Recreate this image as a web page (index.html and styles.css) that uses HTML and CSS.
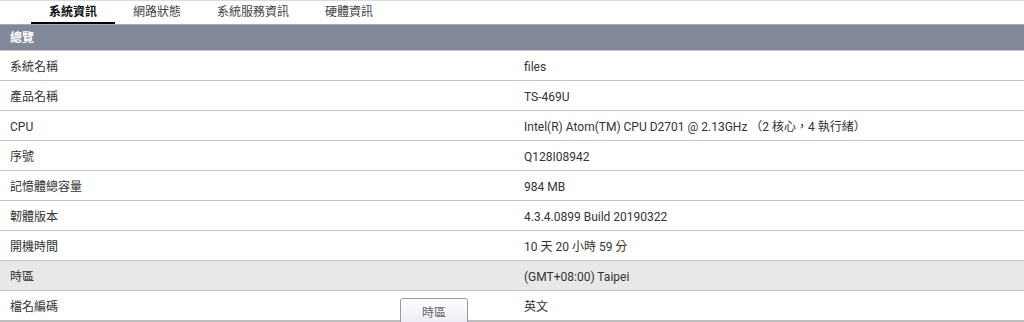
FILE: index.html
```html
<!DOCTYPE html>
<html lang="zh-Hant">
    <head>
        <meta charset="UTF-8">
        <title>系統資訊</title>
        <link rel="stylesheet" href="styles.css">
    </head>
    <body>
        <div class="page">
            <div class="tabs">
                <div class="tab active">系統資訊</div>
                <div class="tab">網路狀態</div>
                <div class="tab">系統服務資訊</div>
                <div class="tab">硬體資訊</div>
            </div>
            <div class="section">總覽</div>
            <div class="rows">
                <div class="row"><div class="label">系統名稱</div><div class="value">files</div></div>
                <div class="row"><div class="label">產品名稱</div><div class="value">TS-469U</div></div>
                <div class="row"><div class="label">CPU</div><div class="value">Intel(R) Atom(TM) CPU D2701 @ 2.13GHz （2 核心，4 執行緒）</div></div>
                <div class="row"><div class="label">序號</div><div class="value">Q128I08942</div></div>
                <div class="row"><div class="label">記憶體總容量</div><div class="value">984 MB</div></div>
                <div class="row"><div class="label">韌體版本</div><div class="value">4.3.4.0899 Build 20190322</div></div>
                <div class="row"><div class="label">開機時間</div><div class="value">10 天 20 小時 59 分</div></div>
                <div class="row hover"><div class="label">時區</div><div class="value">(GMT+08:00) Taipei</div></div>
                <div class="row"><div class="label">檔名編碼</div><div class="value">英文</div></div>
            </div>
            <div class="tooltip">時區</div>
        </div>
    </body>
</html>
```

FILE: styles.css
```css
body {
    margin: 0;
    font-family: Roboto, "Noto Sans CJK TC", sans-serif;
    font-size: 12px;
    color: #333;
    background: #fff;
}

.page {
    position: relative;
    height: 322px;
    overflow: hidden;
}

.tabs {
    display: flex;
    height: 25px;
    padding-left: 31px;
    border-top: 1px solid #dcdcdc;
    border-bottom: 1px solid #aaa;
    box-sizing: border-box;
}

.tab {
    padding: 2px 18px 0;
    line-height: 19px;
    color: #444;
}

.tab.active {
    font-weight: bold;
    color: #111;
    border-bottom: 2px solid #000;
}

.section {
    background: #81889a;
    color: #fff;
    font-weight: bold;
    height: 24px;
    padding: 1px 0 0 10px;
    line-height: 25px;
    border-bottom: 1px solid #c4c4c4;
}

.row {
    display: flex;
    height: 26px;
    padding-top: 3px;
    line-height: 26px;
    border-bottom: 1px solid #c4c4c4;
}

.row.hover {
    background: #e8e8e8;
}

.row:last-child {
    border-bottom: 2px solid #bdbdbd;
}

.label {
    width: 514px;
    padding-left: 10px;
}

.value {
    flex: 1;
}

.tooltip {
    position: absolute;
    left: 400px;
    top: 298px;
    width: 66px;
    height: 26px;
    line-height: 28px;
    text-align: center;
    color: #666;
    border: 1px solid #999;
    border-radius: 3px;
    background: linear-gradient(#fff, #eceaf4);
}
```
